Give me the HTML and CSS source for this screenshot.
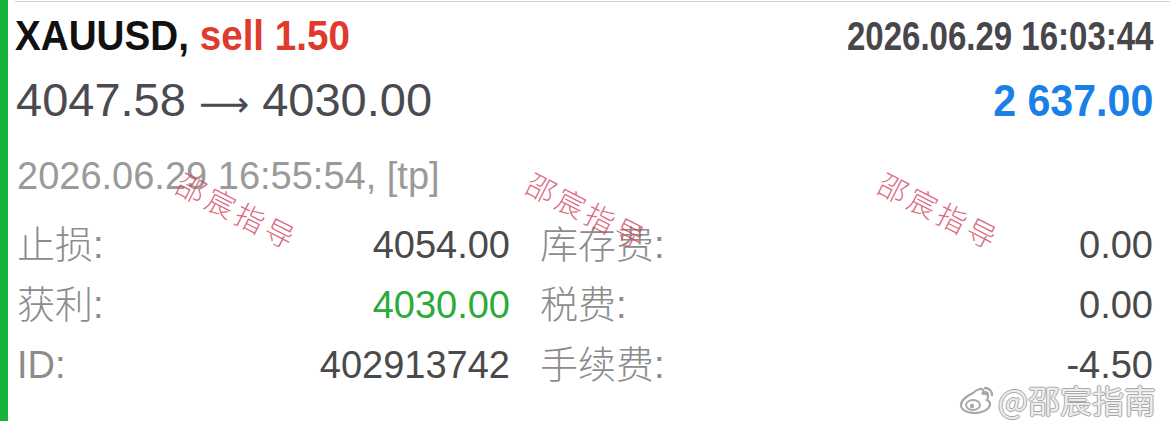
FILE: index.html
```html
<!DOCTYPE html>
<html lang="zh-CN">
<head>
    <meta charset="UTF-8">
    <meta name="viewport" content="width=device-width, initial-scale=1.0">
    <title>XAUUSD sell 1.50</title>
    <link rel="stylesheet" href="styles.css">
</head>
<body>
    <div class="trade">
        <div class="stripe"></div>
        <div class="content">
            <div class="head">
                <div class="title">XAUUSD, <span class="sell">sell 1.50</span></div>
                <div class="opened">2026.06.29 16:03:44</div>
            </div>
            <div class="head price-row">
                <div class="prices">4047.58 <span class="arrow">⟶</span> 4030.00</div>
                <div class="profit">2 637.00</div>
            </div>
            <div class="closed">2026.06.29 16:55:54, [tp]</div>

            <div class="details">
                <div class="cell"><span class="label">止损:</span><span class="value">4054.00</span></div>
                <div class="cell"><span class="label">库存费:</span><span class="value">0.00</span></div>
                <div class="cell"><span class="label">获利:</span><span class="value green">4030.00</span></div>
                <div class="cell"><span class="label">税费:</span><span class="value">0.00</span></div>
                <div class="cell"><span class="label">ID:</span><span class="value">402913742</span></div>
                <div class="cell"><span class="label">手续费:</span><span class="value">-4.50</span></div>
            </div>
        </div>

        <!-- watermarks over the card -->
        <span class="stamp stamp-1">邵宸指导</span>
        <span class="stamp stamp-2">邵宸指导</span>
        <span class="stamp stamp-3">邵宸指导</span>

        <div class="weibo">
            <svg width="38" height="30" viewBox="0 0 38 30">
                <path d="M15 9c4-4 9-5 10-3 1 1 0 3-1 4 3-1 6 0 6 3 0 1 0 2-1 3 2 1 3 2 3 4 0 5-7 9-15 9C9 29 3 26 3 21c0-4 5-9 12-12z" fill="#fff" stroke="#a8a8a8" stroke-width="2.2"/>
                <ellipse cx="15" cy="21" rx="7" ry="5" fill="#fff" stroke="#a8a8a8" stroke-width="2"/>
                <circle cx="14" cy="22" r="2.2" fill="#a8a8a8"/>
                <path d="M27 4c4 0 7 3 7 7" fill="none" stroke="#a8a8a8" stroke-width="2.4" stroke-linecap="round"/>
                <path d="M27 8c2 0 3 1 3 3" fill="none" stroke="#a8a8a8" stroke-width="2.2" stroke-linecap="round"/>
            </svg>
            <span class="handle">@邵宸指南</span>
        </div>
    </div>
</body>
</html>
```

FILE: styles.css
```css
body {
    margin: 0;
    background: #fff;
    font-family: "Liberation Sans", "Noto Sans CJK SC", sans-serif;
}
.trade {
    position: relative;
    display: flex;
    width: 1170px;
    height: 421px;
    overflow: hidden;
}
.stripe {
    width: 8px;
    background-color: #16b23a;
}
.content {
    flex: 1;
    margin: 1px 0 0 7px;
    padding: 4px 17px 0 0;
    border-top: 1px solid #d2d2d2;
}
.head {
    display: flex;
    justify-content: space-between;
    align-items: baseline;
}
/* condensed bold look */
.title,
.opened,
.profit {
    display: inline-block;
    font-weight: bold;
}
.title {
    font-size: 42px;
    line-height: 60px;
    color: #111;
    transform: scaleX(0.92);
    transform-origin: left;
}
.sell {
    color: #e0392e;
}
.opened {
    font-size: 40px;
    color: #47474b;
    transform: scaleX(0.825);
    transform-origin: right;
}
.price-row {
    margin-top: 3px;
    padding-left: 1px;
}
.prices {
    font-size: 47px;
    line-height: 61px;
    color: #4a4a50;
}
.arrow {
    font-family: "DejaVu Sans", sans-serif;
    font-size: 35px;
}
.profit {
    font-size: 44px;
    color: #1a80e8;
    transform: scaleX(0.935);
    transform-origin: right;
}
.closed {
    margin-top: 11px;
    padding-left: 2px;
    font-size: 38px;
    line-height: 60px;
    color: #9a9a9a;
}
.details {
    display: grid;
    grid-template-columns: 495px 1fr;
    grid-auto-rows: 60px;
    column-gap: 30px;
    margin-top: 9px;
}
.cell {
    display: flex;
    justify-content: space-between;
    font-size: 38px;
    line-height: 60px;
}
.cell:nth-child(odd) {
    padding-left: 2px;
}
.label {
    color: #8c8c8c;
    font-weight: 300;
}
.value {
    color: #4a4a4a;
}
.value.green {
    color: #2aab3a;
}
.stamp {
    position: absolute;
    top: 192px;
    font-family: "Noto Sans CJK SC", sans-serif;
    font-size: 29px;
    font-weight: 300;
    line-height: 36px;
    letter-spacing: 4px;
    color: rgba(210, 70, 95, 0.8);
    transform: rotate(27deg);
}
.stamp-1 { left: 172px; }
.stamp-2 { left: 522px; }
.stamp-3 { left: 874px; }
.weibo {
    position: absolute;
    right: 14px;
    bottom: 7px;
    display: flex;
    align-items: center;
    gap: 2px;
}
.handle {
    font-family: "Noto Sans CJK SC", sans-serif;
    font-size: 32px;
    line-height: 30px;
    color: #ececec;
    text-shadow: 1px 0 0 #a8a8a8, -1px 0 0 #a8a8a8, 0 1px 0 #a8a8a8, 0 -1px 0 #a8a8a8;
}
```
